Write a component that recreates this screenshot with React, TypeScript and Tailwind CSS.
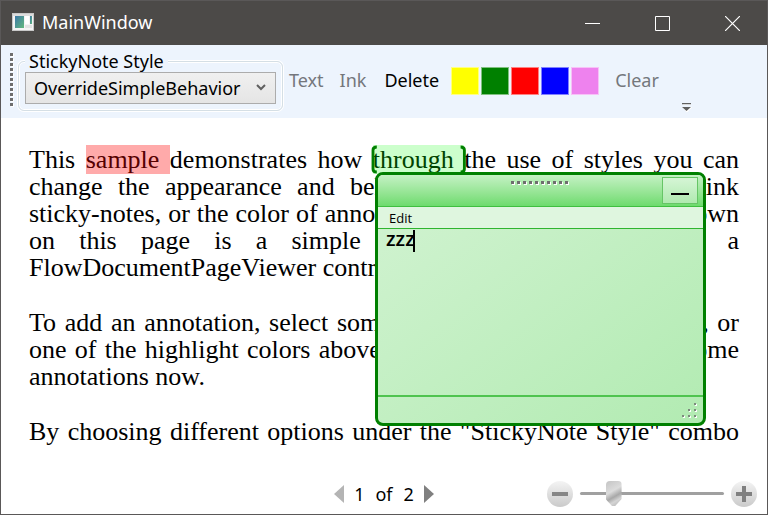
import { useState } from "react";

const SWATCHES = [
  { name: "Yellow", fill: "bg-[#ffff00]" },
  { name: "Green", fill: "bg-[#008000]" },
  { name: "Red", fill: "bg-[#ff0000]" },
  { name: "Blue", fill: "bg-[#0000ff]" },
  { name: "Violet", fill: "bg-[#ee82ee]" },
];

function TitleBar() {
  return (
    <header className="flex h-11 items-center bg-[#4c4a48] pl-[11px] text-white">
      <svg width="22" height="18" viewBox="0 0 22 18" className="-mt-0.5" aria-hidden="true">
        <defs>
          <linearGradient id="app" x1="0" y1="0" x2="1" y2="1">
            <stop offset="0" stopColor="#3c78a8" />
            <stop offset="1" stopColor="#62b87c" />
          </linearGradient>
        </defs>
        <rect x="0.5" y="0.5" width="21" height="17" fill="#f4f4f4" stroke="#c9c9c9" />
        <rect x="1" y="1" width="20" height="2" fill="#dcdcdc" />
        <rect x="3" y="3" width="9" height="12" fill="url(#app)" />
        <rect x="13" y="3" width="4" height="8" fill="#fff" />
        <rect x="18" y="3" width="2" height="8" fill="url(#app)" />
        <rect x="13" y="12" width="7" height="3" fill="#e2e2e2" />
      </svg>
      <h1 className="-mt-0.5 ml-2 flex-1 text-lg">MainWindow</h1>
      <button aria-label="Minimize" className="flex h-11 w-[70px] items-center justify-center">
        <svg width="15" height="15" stroke="#fff"><path d="M0 7.5H15" /></svg>
      </button>
      <button aria-label="Maximize" className="flex h-11 w-[70px] items-center justify-center">
        <svg width="15" height="15" stroke="#fff" fill="none"><path d="M.5.5h14v14H.5z" /></svg>
      </button>
      <button aria-label="Close" className="flex h-11 w-[70px] items-center justify-center">
        <svg width="15" height="15" stroke="#fff" strokeWidth="1.2"><path d="M0 0L15 15M15 0L0 15" /></svg>
      </button>
    </header>
  );
}

function Toolbar() {
  return (
    <div role="toolbar" className="flex h-[73px] items-start bg-[#edf4fd] pl-2 text-lg">
      <svg className="mt-2 shrink-0" width="5" height="54" aria-hidden="true">
        <defs>
          <pattern id="grip" width="5" height="5" patternUnits="userSpaceOnUse">
            <rect x="2" y="1" width="3" height="3" fill="#fff" />
            <rect x="1" y="0" width="3" height="3" fill="#6e6e6e" />
          </pattern>
        </defs>
        <rect width="5" height="54" fill="url(#grip)" />
      </svg>
      <fieldset className="ml-1 mt-1 h-[62px] w-[265px] shrink-0 rounded-md border border-[#d5dfe5] px-[6px] shadow-[0_0_0_1px_#fff,inset_0_0_0_1px_#fff]">
        <legend className="bg-[#edf4fd] px-1 leading-6">
          <label htmlFor="noteStyle">StickyNote Style</label>
        </legend>
        <div className="relative -mt-px">
          <select
            id="noteStyle"
            className="block h-8 w-full appearance-none border border-[#acacac] bg-linear-to-b from-[#f0f0f0] to-[#e5e5e5] pl-2 text-lg leading-6"
          >
            <option>OverrideSimpleBehavior</option>
          </select>
          <svg className="pointer-events-none absolute right-2.5 top-3" width="10" height="8" fill="none" stroke="#606060" strokeWidth="2">
            <path d="M1 1L5 5L9 1" />
          </svg>
        </div>
      </fieldset>
      <div className="flex h-[70px] items-center">
        <button disabled className="ml-1.5 text-[#74777c]">Text</button>
        <button disabled className="ml-4 text-[#74777c]">Ink</button>
        <button className="ml-[18px]">Delete</button>
        <div className="ml-3 mt-0.5 flex gap-0.5">
          {SWATCHES.map((s) => (
            <button key={s.name} aria-label={s.name} className={`size-7 border border-white/50 bg-clip-border ${s.fill}`} />
          ))}
        </div>
        <button disabled className="ml-4 text-[#74777c]">Clear</button>
      </div>
      <button aria-label="More tools" className="ml-[22px] mt-[57px]">
        <svg width="11" height="10" className="block">
          <path d="M2 2.5h8M1.5 5.5h9l-4.5 4.5z" fill="#fff" stroke="#fff" />
          <path d="M1 1h9v1.2H1zM1 5h9l-4.500 4z" fill="#606060" />
        </svg>
      </button>
    </div>
  );
}

function Line({ children }: { children: React.ReactNode }) {
  return <span className="block whitespace-nowrap [text-align-last:justify]">{children}</span>;
}

function StickyNote() {
  return (
    <section
      aria-label="Sticky note"
      className="absolute left-[374px] top-[54px] flex h-[254px] w-[331px] flex-col overflow-hidden rounded-lg border-3 border-[#008000] bg-linear-to-br from-[#d2f3d2] to-[#b2ebb2] font-['Open_Sans','Noto_Sans',sans-serif]"
    >
      <div className="relative h-8 shrink-0 border-b border-[#3fbf3f] bg-linear-to-b from-[#c4f1c4] to-[#6ddb6d]">
        <svg className="absolute left-[132px] top-[5px]" width="60" height="6" aria-hidden="true">
          <defs>
            <pattern id="drag" width="6" height="6" patternUnits="userSpaceOnUse">
              <rect x="2" y="2" width="3" height="3" fill="#fff" />
              <rect x="1" y="1" width="3" height="3" fill="#6e6e6e" />
            </pattern>
          </defs>
          <rect width="60" height="6" fill="url(#drag)" />
        </svg>
        <button
          aria-label="Minimize note"
          className="absolute right-[5px] top-[2px] flex h-[27px] w-9 items-end justify-center border border-[#66c566] bg-linear-to-b from-[#d5f5d5] to-[#b0eab0] pb-2"
        >
          <span className="h-0.5 w-[18px] bg-black" />
        </button>
      </div>
      <div className="h-[22px] shrink-0 border-b border-[#2fb52f] bg-[#dff6df]">
        <button className="block pl-[11px] text-[13px] leading-[22px]">Edit</button>
      </div>
      <div className="relative flex-1">
        <textarea
          aria-label="Note text"
          defaultValue="zzz"
          className="block h-full w-full resize-none bg-transparent px-2 text-xl font-semibold leading-5 outline-none"
        />
        <span className="absolute left-[35px] top-px h-[22px] w-0.5 bg-black" />
      </div>
      <div className="flex h-7 shrink-0 items-start justify-end border-t-2 border-[#4fc44f] pr-1.5 pt-1.5">
        <svg width="16" height="16" aria-hidden="true">
          {[[13, 0], [7, 6], [13, 6], [1, 12], [7, 12], [13, 12]].map(([x, y]) => (
            <g key={`${x}-${y}`}>
              <rect x={x + 1} y={y + 1} width="2" height="2" fill="#fff" />
              <rect x={x} y={y} width="2" height="2" fill="#7d8a7d" />
            </g>
          ))}
        </svg>
      </div>
    </section>
  );
}

function Document() {
  return (
    <main className="relative flex-1 bg-white px-7 pt-7 font-['Liberation_Serif',serif] text-[26px] leading-[27px]">
      <p className="mb-7">
        <Line>
          This <mark className="bg-[#ffaaaa] text-[#550000]">sample </mark>demonstrates how{" "}
          <span className="relative bg-[#ccffcc] text-[#004400]">
            through{" "}
            <svg className="absolute inset-0 h-7 w-full overflow-visible" viewBox="0 0 96 28" preserveAspectRatio="none" fill="none" stroke="#008000" strokeWidth="3">
              <path d="M4 2Q0 2 0 5V24Q0 27 4 27M92 2Q96 2 96 5V24Q96 27 92 27" />
            </svg>
          </span>
          the use of styles you can
        </Line>
        <Line>change the appearance and behavior of either the text or ink</Line>
        <Line>sticky-notes, or the color of annotations with any highlights. Shown</Line>
        <Line>on this page is a simple document contained within a</Line>
        <span className="block">FlowDocumentPageViewer control.</span>
      </p>
      <p className="mb-7">
        <Line>To add an annotation, select some text and then click Text, Ink, or</Line>
        <Line>one of the highlight colors above. You should also try to add some</Line>
        <span className="block">annotations now.</span>
      </p>
      <p>
        <Line>By choosing different options under the "StickyNote Style" combo</Line>
      </p>
      <StickyNote />
    </main>
  );
}

function Footer() {
  const [zoom, setZoom] = useState(20);
  const round = "flex size-[26px] items-center justify-center rounded-full bg-linear-to-b from-[#f4f4f4] to-[#cacaca]";
  return (
    <footer className="grid h-[41px] grid-cols-3 items-center bg-white text-lg">
      <nav className="col-start-2 flex items-center justify-center">
        <button aria-label="Previous page">
          <svg width="10" height="18" className="block"><path d="M10 0V18L0 9z" fill="#b4b4b4" /></svg>
        </button>
        <span className="mx-2.5 flex gap-[11px]">
          <span>1</span>
          <span>of</span>
          <span>2</span>
        </span>
        <button aria-label="Next page">
          <svg width="10" height="18" className="block"><path d="M0 0V18L10 9z" fill="#808080" /></svg>
        </button>
      </nav>
      <div className="flex items-center justify-end gap-[7px] pr-2.5">
        <button aria-label="Zoom out" className={round}>
          <span className="h-1 w-4 bg-[#868686]" />
        </button>
        <input
          type="range"
          aria-label="Zoom"
          value={zoom}
          onChange={(e) => setZoom(Number(e.target.value))}
          className="h-[25px] w-36 appearance-none bg-transparent [&::-webkit-slider-runnable-track]:h-[3px] [&::-webkit-slider-runnable-track]:rounded-full [&::-webkit-slider-runnable-track]:bg-[#a0a0a0] [&::-webkit-slider-thumb]:-mt-[11px] [&::-webkit-slider-thumb]:h-[25px] [&::-webkit-slider-thumb]:w-4 [&::-webkit-slider-thumb]:appearance-none [&::-webkit-slider-thumb]:rounded-sm [&::-webkit-slider-thumb]:bg-[linear-gradient(150deg,#c4c4c4,#dcdcdc_40%,#a8a8a8_60%,#d4d4d4_75%,#b0b0b0)] [&::-webkit-slider-thumb]:[clip-path:polygon(0_0,100%_0,100%_72%,60%_100%,40%_100%,0_72%)]"
        />
        <button aria-label="Zoom in" className={round}>
          <svg width="18" height="18"><path d="M7 1h4v6h6v4h-6v6H7v-6H1V7h6z" fill="#808080" /></svg>
        </button>
      </div>
    </footer>
  );
}

export default function App() {
  return (
    <div className="flex min-h-screen flex-col border border-[#5a5858] bg-white font-['Noto_Sans','Open_Sans',sans-serif] text-black">
      <TitleBar />
      <Toolbar />
      <Document />
      <Footer />
    </div>
  );
}
